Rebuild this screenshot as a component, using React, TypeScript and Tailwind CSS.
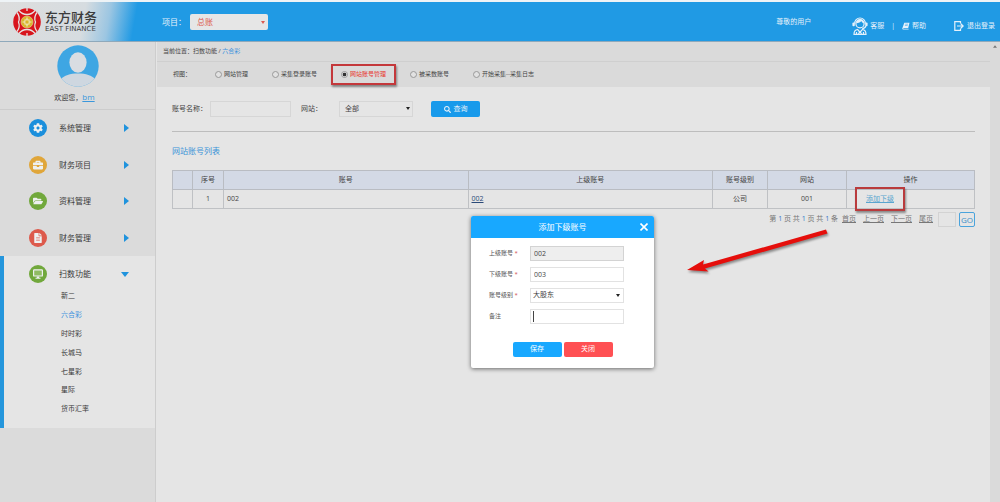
import React, { ReactNode } from "react";
import { FaCog, FaBriefcase, FaFolderOpen, FaFileAlt, FaSearch } from "react-icons/fa";

function Caret({ className }: { className: string }) {
  return (
    <svg viewBox="0 0 6 4" preserveAspectRatio="none" className={className} fill="currentColor" aria-hidden="true">
      <path d="M0 0h6L3 4z" />
    </svg>
  );
}

function Logo() {
  return (
    <svg viewBox="0 0 28 28" className="size-7 shrink-0" aria-hidden="true">
      <circle cx="14" cy="14" r="13.8" fill="#d8141c" />
      <g fill="none" stroke="#e6e2e2" strokeWidth="1.3">
        <path d="M6 2.500 Q9 6.500 14 6.500 Q19 6.500 22 2.500" />
        <path d="M6 25.500 Q9 21.500 14 21.500 Q19 21.500 22 25.500" />
        <path d="M4 4.500 Q7.500 9 5.500 14 Q7.500 19 4 23.500" />
        <path d="M24 4.500 Q20.500 9 22.500 14 Q20.500 19 24 23.500" />
        <path d="M14 0v3M14 25v3" />
      </g>
      <circle cx="14" cy="14" r="6" fill="#d9b62c" stroke="#e8d9a0" strokeWidth="0.600" />
      <path d="M14 9.500v9M9.500 14h9" stroke="#f1e8c4" strokeWidth="1.200" />
      <rect x="11.900" y="11.900" width="4.200" height="4.200" fill="#d9b62c" stroke="#f3ecc8" strokeWidth="0.900" />
    </svg>
  );
}

function Agent() {
  return (
    <svg viewBox="0 0 16 18" className="h-[18px] w-4" fill="none" stroke="#e6f1fa" strokeWidth="1.2" aria-hidden="true">
      <path d="M2.600 6.400a5.400 5.400 0 0 1 10.800 0" />
      <circle cx="8" cy="6.800" r="4.100" />
      <path d="M4.200 6.200c2.600 0 4.200-.8 5-2.200.6 1.300 1.500 2 2.700 2.200V4.500L9 2.600 5.500 3.200z" fill="#e6f1fa" stroke="none" />
      <rect x="0.400" y="5.400" width="2.400" height="3.800" rx="1" fill="#e6f1fa" stroke="none" />
      <rect x="13.200" y="5.400" width="2.400" height="3.800" rx="1" fill="#e6f1fa" stroke="none" />
      <path d="M13.800 9c-.4 1.600-1.600 2.400-3.600 2.600" />
      <path d="M2 17.300c0-3 1.200-4.500 3.600-4.800L8 15.500l2.400-3c2.400.3 3.600 1.800 3.600 4.800z" />
      <path d="M6.500 17l1.500-2.500L9.500 17M4.500 15v2M11.500 15v2" />
    </svg>
  );
}

function Monitor() {
  return (
    <svg viewBox="0 0 12 10" className="h-[10px] w-3" aria-hidden="true">
      <rect x="1.600" y="0.800" width="8.800" height="6.200" rx="0.600" fill="#8fbb62" stroke="currentColor" strokeWidth="1.200" />
      <path d="M4.800 7.500h2.400v1.200h1.300v1h-5v-1h1.300z" fill="currentColor" />
    </svg>
  );
}

function Avatar() {
  return (
    <svg viewBox="0 0 42 42" className="size-[42px] shrink-0" aria-hidden="true">
      <defs>
        <clipPath id="avatar-disc">
          <circle cx="21" cy="21" r="20.700" />
        </clipPath>
      </defs>
      <g clipPath="url(#avatar-disc)">
        <rect width="42" height="42" fill="#3ea6e3" />
        <ellipse cx="21" cy="17.500" rx="8.600" ry="10.200" fill="#d9dde2" />
        <path d="M4 42V34c3-3.500 9-5.500 17-5.500S35 30.500 38 34v8z" fill="#ced7e0" />
      </g>
    </svg>
  );
}

const menu: { label: string; color: string; icon: ReactNode }[] = [
  { label: "系统管理", color: "bg-[#1b8fdc]", icon: <FaCog className="size-[10px]" /> },
  { label: "财务项目", color: "bg-[#e0a63a]", icon: <FaBriefcase className="size-[10px]" /> },
  { label: "资料管理", color: "bg-[#71a83c]", icon: <FaFolderOpen className="size-[10px]" /> },
  { label: "财务管理", color: "bg-[#dd5a4c]", icon: <FaFileAlt className="size-[10px]" /> },
];

const games = ["新二", "六合彩", "时时彩", "长城马", "七星彩", "星际", "货币汇率"];

const views = ["网站管理", "采集登录账号", "网站账号管理", "被采数账号", "开始采集--采集日志"];

function MenuIcon({ color, children }: { color: string; children: ReactNode }) {
  return (
    <span className={`flex size-[18px] shrink-0 items-center justify-center rounded-full text-[#eef0f0] ${color}`}>
      {children}
    </span>
  );
}

function Header() {
  return (
    <header className="flex h-[42px] shrink-0 items-center border-t-2 border-b border-t-[#eef3f6] border-b-[#8fa9bb] bg-[linear-gradient(100deg,#dddddd_0px,#d6dce0_85px,#9cc6e2_110px,#209ae4_136px)] text-[#e6f1fa]">
      <div className="flex w-[162px] shrink-0 items-center gap-1 pl-[13px]">
        <Logo />
        <div className="text-[#3c3c3c]">
          <div className="text-[13px] leading-4 font-medium">东方财务</div>
          <div className="font-['DejaVu_Sans'] text-[7px] leading-[9px] whitespace-nowrap">EAST FINANCE</div>
        </div>
      </div>
      <label htmlFor="project" className="w-7 text-[8px]">项目：</label>
      <div className="relative">
        <select id="project" className="block h-4 w-[78px] appearance-none rounded-xs bg-[#e6e6e6] pl-[7px] text-[8px] text-[#dc5a50]">
          <option>总账</option>
        </select>
        <Caret className="pointer-events-none absolute top-[7px] right-[3px] h-[3px] w-1 text-[#dc5a50]" />
      </div>
      <div className="ml-auto flex items-center pt-[9px] pr-[5px] text-[7px]">
        <span className="mr-[41px] pb-[8px]">尊敬的用户</span>
        <a href="#service" className="flex items-center gap-[2px]">
          <Agent />
          客服
        </a>
        <span className="mx-[7px]">|</span>
        <a href="#help" className="mr-[28px] flex items-center gap-[2px]">
          <svg viewBox="0 0 8 8" className="size-2" fill="currentColor" aria-hidden="true">
            <path d="M2.300.8h5.200L6.200 6H1.600c-.5 0-.5.7 0 .7h5v.8H1C.2 7.500.2 6.500.5 5.800z" />
            <path d="M3.200 2.200h2.800M2.900 3.500h2.800" stroke="#209ae4" strokeWidth="0.500" />
          </svg>
          帮助
        </a>
        <a href="#logout" className="flex items-center gap-[3px]">
          <svg viewBox="0 0 10 10" className="size-[10px]" fill="none" stroke="currentColor" strokeWidth="1.200" aria-hidden="true">
            <path d="M6.500 2.500V.6H.8v8.800h5.700V7.500M3 5h6M6.800 2.800L9.200 5 6.800 7.200" />
          </svg>
          退出登录
        </a>
      </div>
    </header>
  );
}

function Sidebar() {
  return (
    <aside className="w-[156px] shrink-0 border-r border-[#cdcdcd] bg-[#dbdbdb] text-[#3a3a3a]">
      <div className="flex h-[68px] flex-col items-center border-b border-[#cccccc] pt-[3px]">
        <Avatar />
        <p className="mt-1 pr-[6px] text-[7px] leading-3">
          欢迎您，<a href="#user" className="text-[8px] text-[#3a97dc] underline">bm</a>
        </p>
      </div>
      <nav>
        <ul className="flex h-[146px] flex-col">
          {menu.map((m) => (
            <li key={m.label} className="flex flex-1">
              <a href="#menu" className="flex flex-1 items-center pr-[26px] pl-[29px] text-[8px]">
                <MenuIcon color={m.color}>{m.icon}</MenuIcon>
                <span className="ml-3">{m.label}</span>
                <svg viewBox="0 0 5 8" className="ml-auto h-2 w-[5px]" fill="#1f93dd" aria-hidden="true">
                  <path d="M0 0l5 4-5 4z" />
                </svg>
              </a>
            </li>
          ))}
        </ul>
        <div className="border-l-4 border-[#2596dc] bg-[#e5e5e5] pt-[9px] pb-[9px]">
          <a href="#scan" className="flex h-[22px] items-start pr-[26px] pl-[25px] text-[8px]">
            <MenuIcon color="bg-[#71a83c]"><Monitor /></MenuIcon>
            <span className="ml-3 leading-[18px]">扫数功能</span>
            <Caret className="mt-[7px] ml-auto h-[5px] w-2 text-[#1f93dd]" />
          </a>
          <ul className="flex h-[132px] flex-col pl-[57px] text-[7px]">
            {games.map((g) => (
              <li key={g} className="flex flex-1 items-center">
                <a href="#game" className={g === "六合彩" ? "text-[#3f92dd]" : ""}>{g}</a>
              </li>
            ))}
          </ul>
        </div>
      </nav>
    </aside>
  );
}

function AccountTable() {
  return (
    <table className="mt-3 w-full table-fixed border-collapse text-[7px] leading-[10px] text-[#444444] [&_td]:h-[19px] [&_td]:border [&_td]:border-[#bfc1c4] [&_th]:h-[19px] [&_th]:border [&_th]:border-[#b9bcc2] [&_th]:font-normal">
      <colgroup>
        <col className="w-[20px]" />
        <col className="w-[31px]" />
        <col />
        <col />
        <col className="w-[55px]" />
        <col className="w-[79px]" />
        <col className="w-[128px]" />
      </colgroup>
      <thead className="bg-[#d3d9e5]">
        <tr>
          <th />
          <th>序号</th>
          <th>账号</th>
          <th>上级账号</th>
          <th>账号级别</th>
          <th>网站</th>
          <th>操作</th>
        </tr>
      </thead>
      <tbody>
        <tr>
          <td />
          <td className="text-center">1</td>
          <td className="pl-[3px]">002</td>
          <td className="pl-[3px]"><a href="#parent" className="text-[#2b4a78] underline">002</a></td>
          <td className="text-center">公司</td>
          <td className="text-center">001</td>
          <td className="pl-[19px]">
            <span className="relative block w-7">
              <a href="#add" className="text-[#5aa5cf] underline">添加下级</a>
              <span className="pointer-events-none absolute -inset-x-[11px] -inset-y-[7px] border-2 border-[#b93b3d] shadow-[1px_2px_2px_rgba(0,0,0,0.4)]" />
            </span>
          </td>
        </tr>
      </tbody>
    </table>
  );
}

function Pager() {
  const num = <b className="font-medium text-[#2f78c8]">1</b>;
  return (
    <div className="mt-[3px] flex items-center justify-end text-[7px] text-[#777777]">
      <span className="mr-1">第 {num} 页 共 {num} 页 共 {num} 条</span>
      <div className="flex gap-[7px] underline">
        <a href="#first">首页</a>
        <a href="#prev">上一页</a>
        <a href="#next">下一页</a>
        <a href="#last">尾页</a>
      </div>
      <input aria-label="页码" className="ml-[5px] h-[15px] w-[18px] border border-[#d3d3d3]" />
      <button className="ml-[3px] h-[15px] w-4 rounded-xs border border-[#4aa3dc] text-[8px] leading-3 text-[#3a8fca]">GO</button>
    </div>
  );
}

function Field({ id, label, required, children }: { id: string; label: string; required?: boolean; children: ReactNode }) {
  return (
    <div className="flex h-[21px] items-center">
      <label htmlFor={id} className="w-[41px] text-[6px] text-[#555555]">
        {label} {required && <span className="text-[#d05050]">*</span>}
      </label>
      {children}
    </div>
  );
}

function AddDialog() {
  return (
    <div role="dialog" aria-label="添加下级账号" className="absolute top-[216px] left-[471px] w-[183px] rounded-xs bg-white pb-[11px] shadow-[0_1px_4px_rgba(0,0,0,0.55)]">
      <div className="relative flex h-[22px] items-center justify-center rounded-t-xs bg-[#18a8ff] text-[8px] text-white">
        添加下级账号
        <button aria-label="关闭窗口" className="absolute top-[7px] right-[6px]">
          <svg viewBox="0 0 8 8" className="size-2" stroke="white" strokeWidth="1.600" aria-hidden="true">
            <path d="M.5.5l7 7M7.500.5l-7 7" />
          </svg>
        </button>
      </div>
      <form className="pt-[5px] pl-[18px] text-[#444444]">
        <Field id="parent" label="上级账号" required>
          <input id="parent" defaultValue="002" readOnly className="h-[15px] w-[94px] border border-[#d3d3d3] bg-[#eeeeee] px-[3px] text-[7px]" />
        </Field>
        <Field id="child" label="下级账号" required>
          <input id="child" defaultValue="003" className="h-[15px] w-[94px] border border-[#e2e2e2] px-[3px] text-[7px]" />
        </Field>
        <Field id="level" label="账号级别" required>
          <div className="relative">
            <select id="level" className="block h-[15px] w-[94px] appearance-none border border-[#e2e2e2] px-[2px] text-[7px]">
              <option>大股东</option>
            </select>
            <Caret className="pointer-events-none absolute top-[6px] right-1 h-[3px] w-1 text-[#222222]" />
          </div>
        </Field>
        <Field id="note" label="备注">
          <div className="relative">
            <input id="note" className="block h-[15px] w-[94px] border border-[#e2e2e2] px-[3px] text-[7px]" />
            <span className="absolute top-[2px] left-[3px] h-[11px] w-px bg-[#444444]" />
          </div>
        </Field>
      </form>
      <div className="mt-[15px] flex justify-center gap-[2px] text-[7px] text-white">
        <button className="h-[15px] w-[49px] rounded-xs bg-[#18a8ff]">保存</button>
        <button className="h-[15px] w-[49px] rounded-xs bg-[#ff5053]">关闭</button>
      </div>
    </div>
  );
}

function Arrow() {
  return (
    <svg viewBox="0 0 146 50" className="pointer-events-none absolute top-[226px] left-[684px] h-[50px] w-[146px] drop-shadow-[1px_2px_1px_rgba(0,0,0,0.4)]" aria-hidden="true">
      <path d="M3 44L20 34L19 38.500L142 3.500L143.500 7.500L21 42.500L24.500 45.500z" fill="#e50f0c" />
    </svg>
  );
}

export default function App() {
  return (
    <div className="relative flex min-h-screen flex-col bg-[#e5e5e5] font-['Open_Sans','Noto_Sans_CJK_SC',sans-serif] leading-normal">
      <Header />
      <div className="flex flex-1">
        <Sidebar />
        <main className="min-w-0 flex-1 pl-px">
          <div className="flex h-5 items-center border-b border-[#cfcfcf] bg-[#dadada] pl-[6px] text-[6px] text-[#444444]">
            <span>当前位置：扫数功能 / <a href="#crumb" className="text-[#3f92dd]">六合彩</a></span>
          </div>
          <fieldset className="flex h-[25px] items-center bg-[#dadada] pl-4 text-[6px] text-[#444444]">
            <span className="w-[42px]">视图：</span>
            <div className="flex gap-6">
              {views.map((v, i) => (
                <label key={v} className={`relative flex items-center gap-[2px] ${i === 2 ? "text-[#e8352c]" : ""}`}>
                  <input
                    type="radio"
                    name="view"
                    defaultChecked={i === 2}
                    className="size-[7px] appearance-none rounded-full border border-[#999999] bg-[#e2e2e2] checked:bg-[radial-gradient(circle,#333333_45%,#e2e2e2_60%)]"
                  />
                  {v}
                  {i === 2 && (
                    <span className="pointer-events-none absolute -inset-x-[10px] -inset-y-[6px] border-2 border-[#c4383b] shadow-[1px_2px_2px_rgba(0,0,0,0.4)]" />
                  )}
                </label>
              ))}
            </div>
          </fieldset>
          <div className="pr-[15px] pl-[15px]">
            <form className="flex h-[45px] items-center border-b border-[#bdbdbd] text-[7px] text-[#444444]">
              <label htmlFor="name" className="w-[38px]">账号名称：</label>
              <input id="name" className="h-4 w-[81px] border border-[#d6d6d6] px-1" />
              <label htmlFor="site" className="ml-[10px] w-[38px]">网站：</label>
              <div className="relative">
                <select id="site" className="block h-4 w-[74px] appearance-none border border-[#d6d6d6] pl-[5px]">
                  <option>全部</option>
                </select>
                <Caret className="pointer-events-none absolute top-[6px] right-[3px] h-[3px] w-1 text-[#222222]" />
              </div>
              <button type="button" className="ml-[18px] flex h-4 w-[49px] items-center justify-center gap-[3px] rounded-xs bg-[#189aeb] text-[#e6f1fa]">
                <FaSearch className="size-[7px]" />
                查询
              </button>
            </form>
            <h2 className="mt-3 text-[8px] leading-[14px] text-[#3a93d8]">网站账号列表</h2>
            <AccountTable />
            <Pager />
          </div>
        </main>
        <div className="w-[10px] shrink-0 bg-[#dadada]">
          <svg viewBox="0 0 6 4" className="mx-auto mt-[3px] h-[3px] w-1" fill="#777777" aria-hidden="true">
            <path d="M3 0l3 4H0z" />
          </svg>
        </div>
      </div>
      <AddDialog />
      <Arrow />
    </div>
  );
}
